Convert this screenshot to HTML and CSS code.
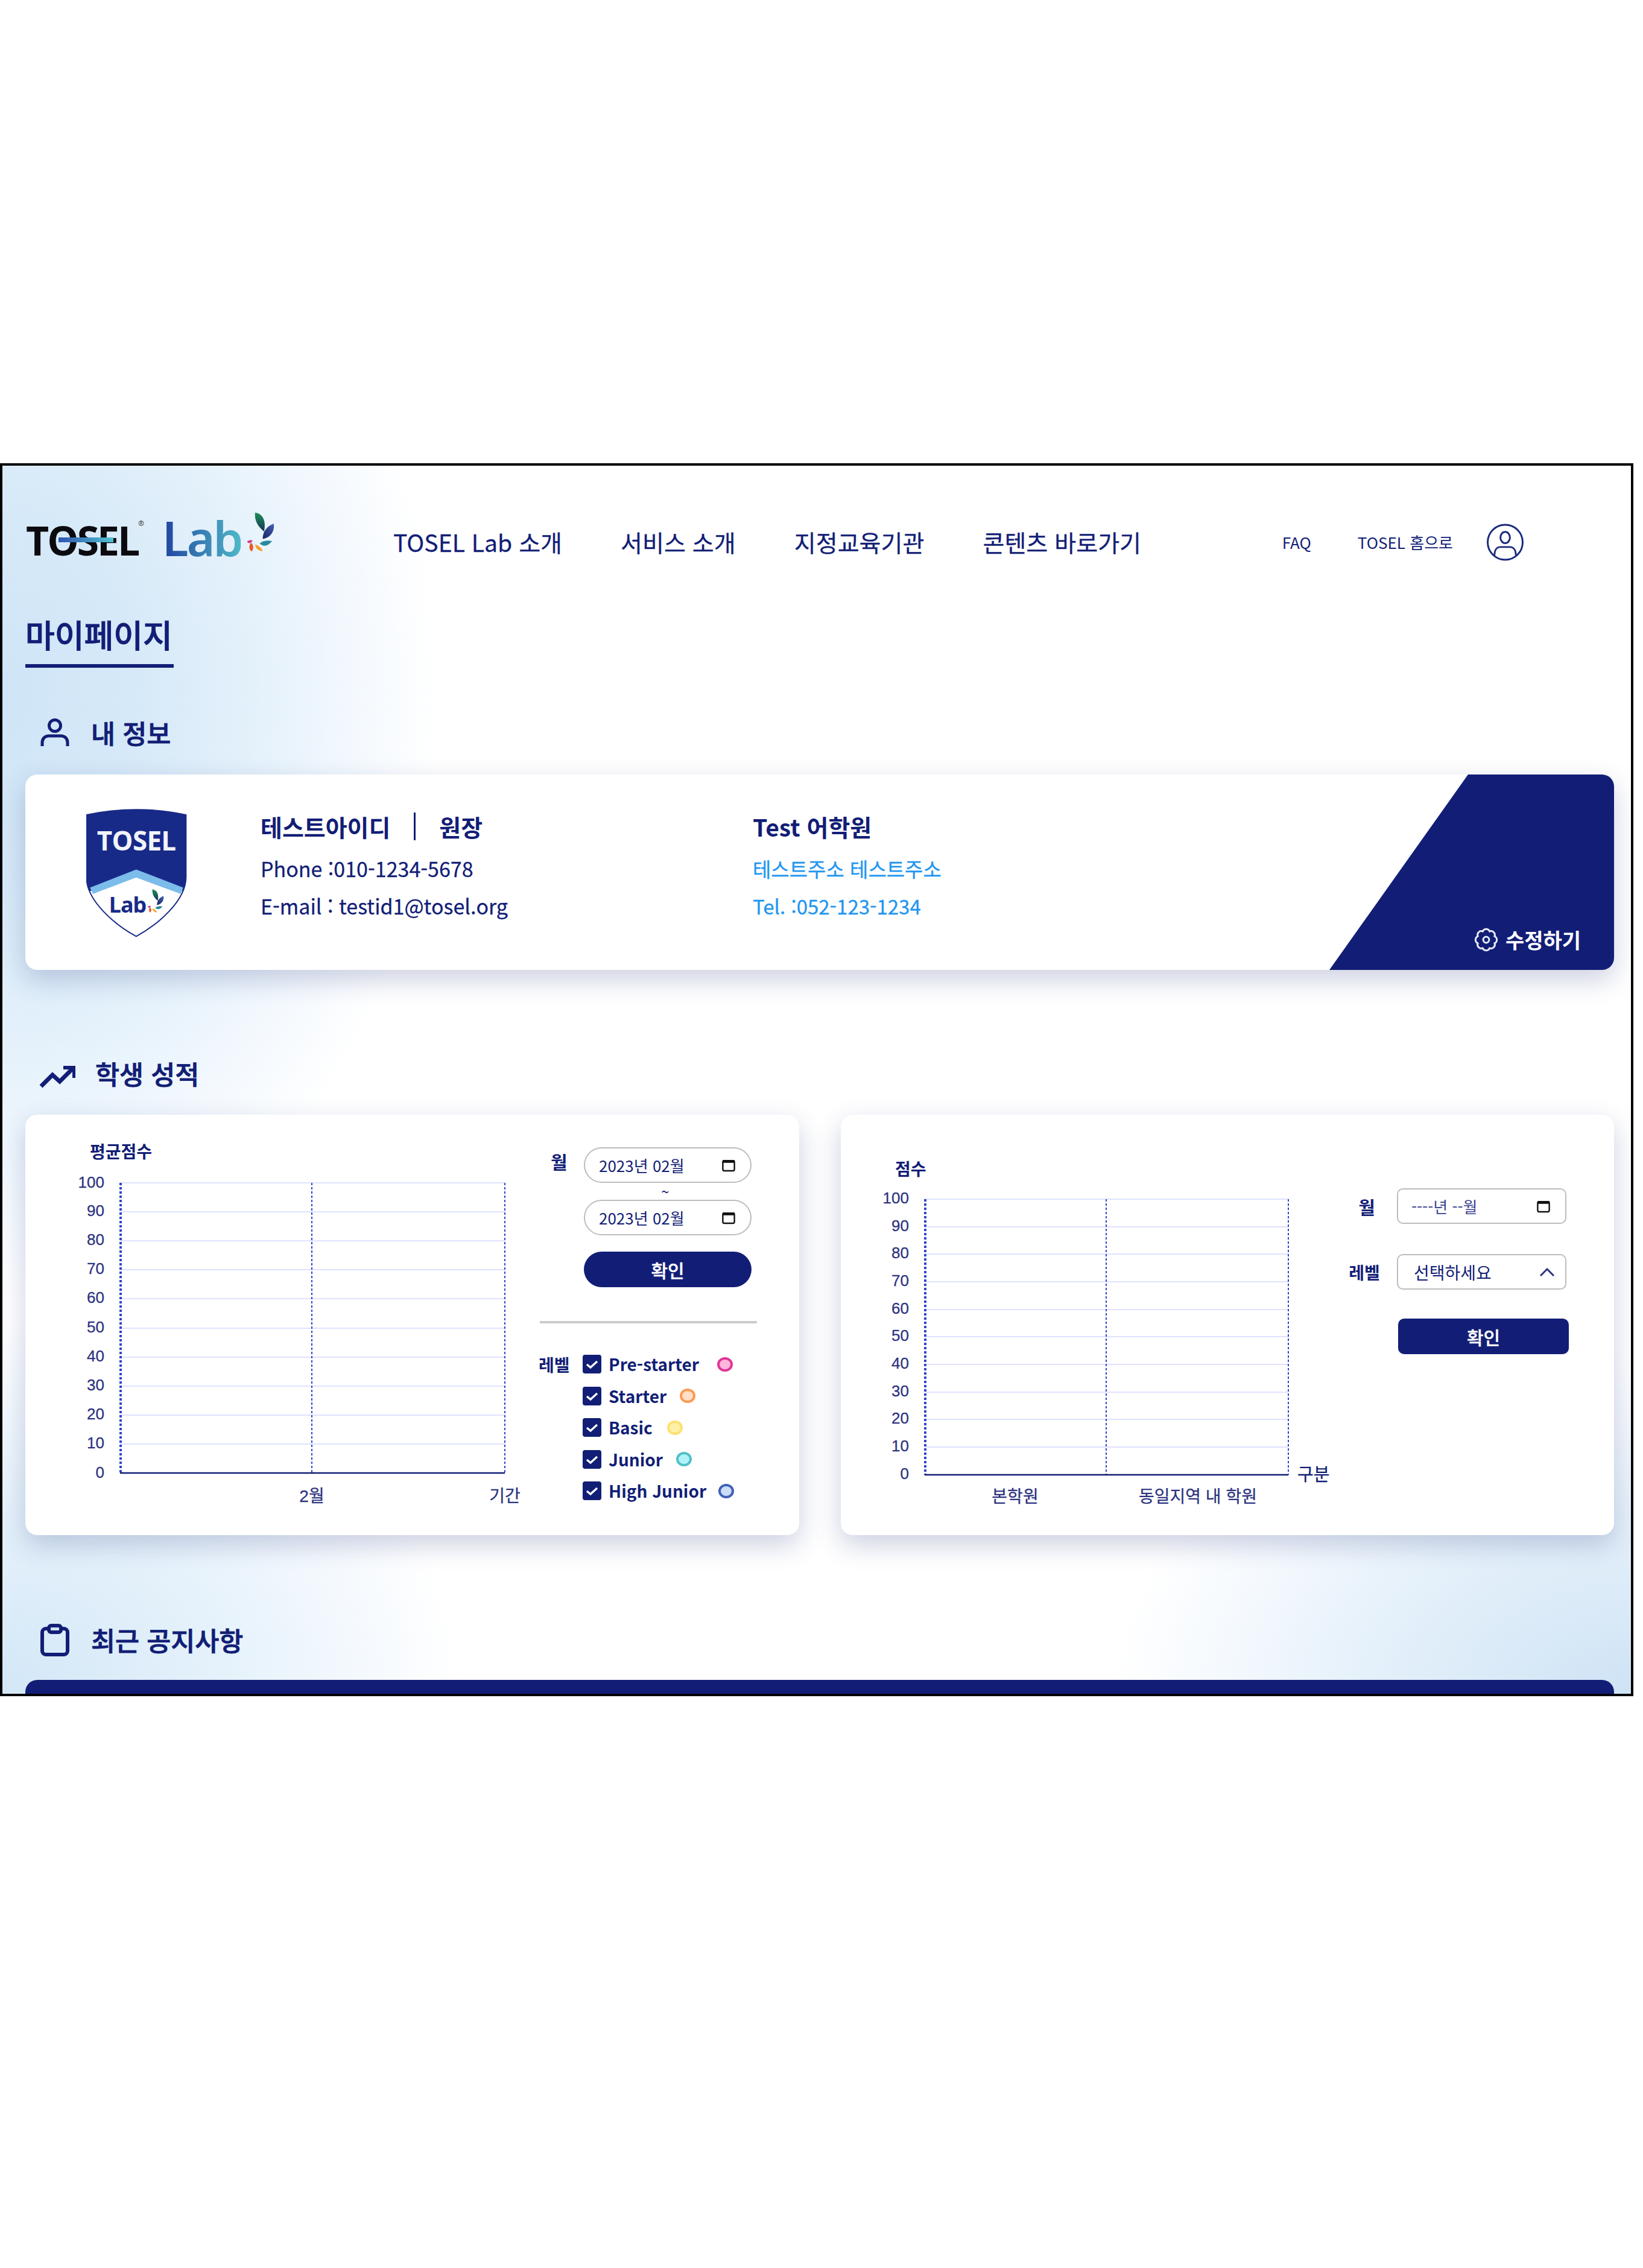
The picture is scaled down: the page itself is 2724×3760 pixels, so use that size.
FILE: index.html
```html
<!DOCTYPE html>
<html lang="ko">
<head>
    <meta charset="UTF-8">
    <title>TOSEL Lab 마이페이지</title>
    <link rel="stylesheet" href="styles.css">
</head>
<body>
    <svg class="defs" width="0" height="0">
        <defs>
            <linearGradient id="leaf-green" x1="0" y1="0" x2="0" y2="1">
                <stop offset="0" stop-color="#1f8f55"/>
                <stop offset="1" stop-color="#14365a"/>
            </linearGradient>
            <linearGradient id="leaf-navy" x1="1" y1="0" x2="0" y2="1">
                <stop offset="0" stop-color="#4460b8"/>
                <stop offset="1" stop-color="#182560"/>
            </linearGradient>
            <symbol id="leaves" viewBox="1160 35 145 205">
                <path fill="url(#leaf-green)" d="M1205 40C1240 45 1262 75 1250 135C1225 115 1200 85 1205 40Z"/>
                <path fill="url(#leaf-navy)" d="M1298 95C1305 130 1285 165 1243 172C1245 130 1265 110 1298 95Z"/>
                <path fill="#2a8a9c" d="M1290 183C1270 210 1245 212 1228 195C1245 180 1270 178 1290 183Z"/>
                <path fill="#e85a20" d="M1185 190C1200 205 1198 225 1187 235C1172 220 1175 205 1185 190Z"/>
                <path fill="#f6a030" d="M1205 200C1225 205 1240 220 1243 233C1222 232 1208 222 1205 200Z"/>
                <path fill="#d03a90" d="M1165 185C1175 175 1190 178 1193 180C1185 195 1172 198 1165 185Z"/>
            </symbol>
            <symbol id="calendar" viewBox="0 0 20 20">
                <rect x="2" y="3.5" width="16" height="14" rx="2" fill="none" stroke="#111" stroke-width="2"/>
                <rect x="2" y="2.5" width="16" height="4" fill="#111"/>
            </symbol>
            <symbol id="check" viewBox="0 0 31 31">
                <path d="M7 16l6 5 11-10" fill="none" stroke="#fff" stroke-width="3.4"/>
            </symbol>
        </defs>
    </svg>

    <div class="frame">
        <header class="header">
            <div class="logo">
                <span class="logo-tosel">TOSEL<i class="logo-bar"></i><sup class="logo-r">®</sup></span>
                <span class="logo-lab">Lab</span>
                <svg class="logo-leaves"><use href="#leaves"/></svg>
            </div>
            <nav class="nav">
                <a>TOSEL Lab 소개</a>
                <a>서비스 소개</a>
                <a>지정교육기관</a>
                <a>콘텐츠 바로가기</a>
            </nav>
            <div class="util">
                <a class="util-faq">FAQ</a>
                <a class="util-home">TOSEL 홈으로</a>
                <svg class="util-user" viewBox="0 0 62 62" fill="none" stroke="#1a2a80" stroke-width="3">
                    <circle cx="31" cy="31" r="29.5"/>
                    <ellipse cx="31" cy="23" rx="8" ry="9.5"/>
                    <path d="M13 53c0-9 4-14 10-14h16c6 0 10 5 10 14"/>
                </svg>
            </div>
        </header>

        <main class="main">
            <h1 class="page-title">마이페이지</h1>

            <h2 class="section-title first">
                <svg class="section-icon" viewBox="0 0 48 48" fill="none" stroke="#121e76" stroke-width="5">
                    <circle cx="24" cy="12" r="9.5"/>
                    <path d="M3 46v-6c0-7 5-11 11-11h20c6 0 11 4 11 11v6"/>
                </svg>
                내 정보
            </h2>
            <section class="card profile">
                <svg class="shield" viewBox="100 60 500 640">
                    <path d="M100 90C260 55 440 55 596 90V400C596 520 450 640 348 695C246 640 100 520 100 400Z" fill="#fff" stroke="#182a88" stroke-width="6"/>
                    <path d="M100 90C260 55 440 55 596 90V400C596 425 590 450 580 470L348 380L118 470C106 450 100 425 100 400Z" fill="#182a88"/>
                    <path d="M348 362L582 452L570 484L348 402L132 484L118 452Z" fill="#7cbcea"/>
                    <text x="349" y="267" class="shield-tosel" text-anchor="middle">TOSEL</text>
                    <text x="305" y="577" class="shield-lab" text-anchor="middle">Lab</text>
                    <use href="#leaves" x="402" y="458" width="86" height="122"/>
                </svg>
                <div class="info info-user">
                    <div class="info-name"><span>테스트아이디</span><i class="info-sep"></i><span>원장</span></div>
                    <p class="info-line">Phone :010-1234-5678</p>
                    <p class="info-line">E-mail : testid1@tosel.org</p>
                </div>
                <div class="info info-academy">
                    <div class="info-name"><span>Test 어학원</span></div>
                    <p class="info-line">테스트주소 테스트주소</p>
                    <p class="info-line">Tel. :052-123-1234</p>
                </div>
                <div class="edit-corner">
                    <a class="edit-link">
                        <svg class="edit-icon" viewBox="0 0 24 24" fill="none" stroke="#e8ebf6" stroke-width="1.7">
                            <circle cx="12" cy="12" r="2.8"/>
                            <path d="M19.95 8.71A3.6 3.6 0 0 1 19.95 15.29A3.6 3.6 0 0 1 15.29 19.95A3.6 3.6 0 0 1 8.71 19.95A3.6 3.6 0 0 1 4.05 15.29A3.6 3.6 0 0 1 4.05 8.71A3.6 3.6 0 0 1 8.71 4.05A3.6 3.6 0 0 1 15.29 4.05A3.6 3.6 0 0 1 19.95 8.71Z"/>
                        </svg>
                        수정하기
                    </a>
                </div>
            </section>

            <h2 class="section-title">
                <svg class="section-icon trend" viewBox="0 0 60 38" fill="none" stroke="#121e76" stroke-width="7">
                    <path d="M3 35l19-19 12 11L55 6"/>
                    <path d="M40 4h18v17" stroke-width="6"/>
                </svg>
                <span class="trend-label">학생 성적</span>
            </h2>
            <div class="card-row">
                <section class="card chart-card">
                    <svg class="chart chart-left" viewBox="0 0 850 697">
                        <g class="grid">
                            <line x1="157" x2="795" y1="113" y2="113"/>
                            <line x1="157" x2="795" y1="161" y2="161"/>
                            <line x1="157" x2="795" y1="209" y2="209"/>
                            <line x1="157" x2="795" y1="257" y2="257"/>
                            <line x1="157" x2="795" y1="305" y2="305"/>
                            <line x1="157" x2="795" y1="354" y2="354"/>
                            <line x1="157" x2="795" y1="402" y2="402"/>
                            <line x1="157" x2="795" y1="450" y2="450"/>
                            <line x1="157" x2="795" y1="498" y2="498"/>
                            <line x1="157" x2="795" y1="546" y2="546"/>
                        </g>
                        <g class="dash">
                            <line x1="157" x2="157" y1="113" y2="594"/>
                            <line x1="159" x2="159" y1="113" y2="594"/>
                            <line x1="475" x2="475" y1="113" y2="594"/>
                            <line x1="795" x2="795" y1="113" y2="594"/>
                        </g>
                        <line class="axis" x1="157" x2="795" y1="594" y2="594"/>
                        <g class="tick" text-anchor="end">
                            <text x="131" y="121">100</text>
                            <text x="131" y="168">90</text>
                            <text x="131" y="216">80</text>
                            <text x="131" y="264">70</text>
                            <text x="131" y="312">60</text>
                            <text x="131" y="361">50</text>
                            <text x="131" y="409">40</text>
                            <text x="131" y="457">30</text>
                            <text x="131" y="505">20</text>
                            <text x="131" y="553">10</text>
                            <text x="131" y="602">0</text>
                        </g>
                        <text class="axis-title" x="107" y="72">평균점수</text>
                        <text class="axis-label" x="475" y="642" text-anchor="middle">2월</text>
                        <text class="axis-label" x="795" y="642" text-anchor="middle">기간</text>
                    </svg>
                    <div class="filter">
                        <div class="date-range">
                            <span class="field-label month-label">월</span>
                            <div class="date-fields">
                                <div class="pill-input"><span>2023년 02월</span><svg class="cal"><use href="#calendar"/></svg></div>
                                <div class="tilde">~</div>
                                <div class="pill-input"><span>2023년 02월</span><svg class="cal"><use href="#calendar"/></svg></div>
                                <button class="btn pill-btn">확인</button>
                            </div>
                        </div>
                        <hr class="filter-line">
                        <div class="levels">
                            <span class="field-label level-label">레벨</span>
                            <ul class="level-list">
                                <li><span class="box"><svg><use href="#check"/></svg></span>Pre-starter<i class="dot dot-pink"></i></li>
                                <li><span class="box"><svg><use href="#check"/></svg></span>Starter<i class="dot dot-orange"></i></li>
                                <li><span class="box"><svg><use href="#check"/></svg></span>Basic<i class="dot dot-yellow"></i></li>
                                <li><span class="box"><svg><use href="#check"/></svg></span>Junior<i class="dot dot-teal"></i></li>
                                <li><span class="box"><svg><use href="#check"/></svg></span>High Junior<i class="dot dot-blue"></i></li>
                            </ul>
                        </div>
                    </div>
                </section>

                <section class="card chart-card">
                    <svg class="chart chart-right" viewBox="0 0 836 697">
                        <g class="grid">
                            <line x1="139" x2="742" y1="140" y2="140"/>
                            <line x1="139" x2="742" y1="186" y2="186"/>
                            <line x1="139" x2="742" y1="231" y2="231"/>
                            <line x1="139" x2="742" y1="277" y2="277"/>
                            <line x1="139" x2="742" y1="323" y2="323"/>
                            <line x1="139" x2="742" y1="368" y2="368"/>
                            <line x1="139" x2="742" y1="414" y2="414"/>
                            <line x1="139" x2="742" y1="460" y2="460"/>
                            <line x1="139" x2="742" y1="505" y2="505"/>
                            <line x1="139" x2="742" y1="551" y2="551"/>
                        </g>
                        <g class="dash">
                            <line x1="139" x2="139" y1="140" y2="597"/>
                            <line x1="141" x2="141" y1="140" y2="597"/>
                            <line x1="440" x2="440" y1="140" y2="597"/>
                            <line x1="742" x2="742" y1="140" y2="597"/>
                        </g>
                        <line class="axis" x1="139" x2="742" y1="597" y2="597"/>
                        <g class="tick" text-anchor="end">
                            <text x="113" y="147">100</text>
                            <text x="113" y="193">90</text>
                            <text x="113" y="238">80</text>
                            <text x="113" y="284">70</text>
                            <text x="113" y="330">60</text>
                            <text x="113" y="375">50</text>
                            <text x="113" y="421">40</text>
                            <text x="113" y="467">30</text>
                            <text x="113" y="512">20</text>
                            <text x="113" y="558">10</text>
                            <text x="113" y="604">0</text>
                        </g>
                        <text class="axis-title" x="90" y="101">점수</text>
                        <text class="axis-label" x="289" y="643" text-anchor="middle">본학원</text>
                        <text class="axis-label" x="592" y="643" text-anchor="middle">동일지역 내 학원</text>
                        <text class="axis-unit" x="757" y="607">구분</text>
                    </svg>
                    <div class="filter filter-right">
                        <div class="form-row">
                            <span class="field-label">월</span>
                            <div class="box-input"><span class="placeholder">----년 --월</span><svg class="cal"><use href="#calendar"/></svg></div>
                        </div>
                        <div class="form-row">
                            <span class="field-label">레벨</span>
                            <div class="box-input select"><span>선택하세요</span>
                                <svg class="chevron" viewBox="0 0 24 14" fill="none" stroke="#2a3585" stroke-width="3"><path d="M1 13L12 2l11 11"/></svg>
                            </div>
                        </div>
                        <button class="btn box-btn">확인</button>
                    </div>
                </section>
            </div>

            <h2 class="section-title">
                <svg class="section-icon" viewBox="0 0 48 54" fill="none" stroke="#121e76" stroke-width="6">
                    <rect x="3" y="8" width="42" height="43" rx="6"/>
                    <rect x="14" y="3" width="20" height="11" rx="4" fill="#cfe0f2"/>
                </svg>
                최근 공지사항
            </h2>
            <div class="notice-bar"></div>
        </main>
    </div>
</body>
</html>
```

FILE: styles.css
```css
* {
    box-sizing: border-box;
}

body {
    margin: 0;
    background-color: #fff;
    color: #121e76;
    font-family: "Noto Sans CJK KR", "Noto Sans", sans-serif;
}

.defs {
    position: absolute;
}

a {
    color: inherit;
    text-decoration: none;
}

/* frame */
.frame {
    width: 2708px;
    height: 2044px;
    margin-top: 768px;
    border: 4px solid #000;
    overflow: hidden;
    background:
        radial-gradient(ellipse 720px 1000px at 0 380px, #cfe5f7 0%, #d6e9f8 30%, #e4f1fb 58%, #f4f9fe 82%, rgba(255, 255, 255, 0) 100%),
        radial-gradient(ellipse 760px 620px at 0 100%, #d3e7f7 0%, #e6f2fb 50%, #f6fafe 82%, rgba(255, 255, 255, 0) 100%),
        radial-gradient(ellipse 860px 560px at 100% 100%, #cfe3f5 0%, #e4f0fa 50%, #f6fafe 82%, rgba(255, 255, 255, 0) 100%),
        #fff;
}

/* header */
.header {
    display: flex;
    align-items: center;
    height: 256px;
    padding: 0 178px 0 39px;
}

.logo {
    display: flex;
    align-items: flex-start;
    flex: none;
    width: 609px;
    height: 70px;
}

.logo-tosel {
    position: relative;
    flex: none;
    width: 231px;
    margin-top: -10px;
    color: #0b0b0f;
    font-family: "Open Sans", sans-serif;
    font-size: 66px;
    font-weight: 700;
    line-height: 80px;
    letter-spacing: -3px;
}

.logo-bar {
    position: absolute;
    left: 54px;
    top: 36px;
    width: 91px;
    height: 8px;
    background: linear-gradient(90deg, #2f55b0, #52c0d0);
}

.logo-r {
    position: absolute;
    left: 186px;
    top: 0;
    font-size: 12px;
    line-height: 26px;
    letter-spacing: 0;
    color: #555;
}

.logo-lab {
    flex: none;
    width: 130px;
    margin: -24px 0 0 -5px;
    color: transparent;
    background: linear-gradient(90deg, #1f43a0, #4fb8c8);
    -webkit-background-clip: text;
    background-clip: text;
    font-family: "Noto Sans", sans-serif;
    font-size: 80px;
    font-weight: 600;
    line-height: 100px;
    letter-spacing: -3px;
}

.logo-leaves {
    flex: none;
    width: 48px;
    height: 68px;
    margin: -17px 0 0 9px;
}

.nav {
    display: flex;
    gap: 97px;
    margin-top: -4px;
    font-size: 39.1px;
    line-height: 50px;
    -webkit-text-stroke: 0.3px #121e76;
}

.util {
    display: flex;
    align-items: center;
    margin-left: auto;
    font-size: 26px;
}

.util-faq {
    margin: -4px 77px 0 0;
}

.util-home {
    margin: -4px 56px 0 0;
}

.util-user {
    width: 61px;
    height: 62px;
    margin-top: -2px;
}

/* main */
.main {
    padding: 0 28px 0 38px;
}

.page-title {
    width: 246px;
    margin: 0;
    padding-bottom: 27px;
    border-bottom: 6px solid #121e76;
    font-size: 53px;
    font-weight: 500;
    line-height: 46px;
    -webkit-text-stroke: 0.9px #121e76;
}

.section-title {
    display: flex;
    align-items: center;
    gap: 36px;
    height: 48px;
    margin: 150px 0 42px;
    padding-left: 25px;
    font-size: 43.5px;
    font-weight: 500;
    line-height: 44px;
    -webkit-text-stroke: 0.9px #121e76;
}

.section-title.first {
    margin-top: 86px;
    margin-bottom: 43px;
    padding-bottom: 4px;
}

.section-icon {
    flex: none;
    width: 48px;
    height: 54px;
}

.section-icon.trend {
    width: 60px;
    height: 38px;
    margin: 6px 0 0 -2px;
}

.trend-label {
    margin-left: -3px;
    padding-bottom: 4px;
}

/* cards */
.card {
    position: relative;
    display: flex;
    background-color: #fff;
    border-radius: 20px;
    box-shadow: 0 16px 44px rgba(40, 60, 130, 0.24);
}

.profile {
    height: 324px;
    padding: 57px 0 0 101px;
    overflow: hidden;
}

.shield {
    flex: none;
    width: 167px;
    height: 213px;
}

.shield-tosel {
    fill: #f2f4fa;
    font-family: "Open Sans", sans-serif;
    font-size: 132px;
    font-weight: 700;
    letter-spacing: -2px;
}

.shield-lab {
    fill: #182a88;
    font-family: "Noto Sans", sans-serif;
    font-size: 108px;
    font-weight: 700;
    letter-spacing: -3px;
}

.info {
    margin-top: 6px;
}

.info-user {
    flex: none;
    width: 816px;
    margin-left: 122px;
}

.info-name {
    display: flex;
    align-items: center;
    height: 46px;
    margin-bottom: 16px;
    font-size: 39px;
    font-weight: 700;
}

.info-sep {
    width: 3px;
    height: 46px;
    margin: 0 39px;
    background-color: #121e76;
}

.info-line {
    margin: 0;
    font-size: 34px;
    line-height: 62px;
    -webkit-text-stroke: 0.3px currentColor;
}

.info-academy .info-line {
    color: #1f96f0;
    font-size: 33px;
}

.edit-corner {
    position: absolute;
    right: 0;
    bottom: 0;
    display: flex;
    align-items: flex-end;
    justify-content: flex-end;
    width: 472px;
    height: 324px;
    padding: 0 55px 29px 0;
    background-color: #121e76;
    clip-path: polygon(230px 0, 100% 0, 100% 100%, 0 100%);
}

.edit-link {
    display: flex;
    align-items: center;
    gap: 11px;
    color: #fff;
    font-size: 34px;
    font-weight: 700;
    line-height: 42px;
}

.edit-icon {
    width: 42px;
    height: 42px;
}

.card-row {
    display: grid;
    grid-template-columns: 1283px 1282px;
    gap: 69px;
}

.chart-card {
    height: 697px;
}

/* charts */
.chart {
    flex: none;
    height: 697px;
    font-family: "Liberation Sans", "Noto Sans CJK KR", sans-serif;
}

.chart-left {
    width: 850px;
}

.chart-right {
    width: 836px;
}

.grid line {
    stroke: #dfe3ff;
    stroke-width: 2;
}

.dash line {
    stroke: #3346c8;
    stroke-width: 2;
    stroke-dasharray: 4 3;
}

.axis {
    stroke: #121e76;
    stroke-width: 2.5;
}

.tick text {
    fill: #2c3380;
    font-size: 26px;
    stroke: #2c3380;
    stroke-width: 0.3;
}

.axis-title {
    fill: #121e76;
    font-size: 28px;
    font-weight: 700;
}

.axis-label {
    fill: #2c3380;
    font-size: 28px;
    stroke: #2c3380;
    stroke-width: 0.3;
}

.axis-unit {
    fill: #121e76;
    font-size: 29px;
    stroke: #121e76;
    stroke-width: 0.3;
}

/* filters */
.filter {
    width: 364px;
    padding-top: 54px;
}

.date-range {
    display: flex;
}

.field-label {
    font-size: 28px;
    font-weight: 700;
    line-height: 36px;
}

.month-label {
    width: 76px;
    padding: 5px 0 0 21px;
    font-size: 30px;
}

.date-fields {
    display: flex;
    flex-direction: column;
    width: 278px;
}

.pill-input {
    display: flex;
    align-items: center;
    justify-content: space-between;
    height: 59px;
    padding: 0 24px 0 23px;
    border: 2px solid #bdbdbd;
    border-radius: 30px;
    font-size: 26px;
}

.cal {
    width: 24px;
    height: 24px;
}

.tilde {
    height: 28px;
    padding-right: 8px;
    font-size: 24px;
    line-height: 28px;
    text-align: center;
}

.btn {
    display: block;
    border: none;
    background-color: #121e76;
    color: #fff;
    font-family: inherit;
    font-size: 30px;
    font-weight: 500;
    line-height: 40px;
    -webkit-text-stroke: 0.4px #fff;
}

.pill-btn {
    height: 59px;
    margin-top: 27px;
    border-radius: 30px;
}

.filter-line {
    width: 360px;
    height: 4px;
    margin: 56px 0 52px 3px;
    border: none;
    background-color: #ccc;
}

.levels {
    display: flex;
}

.level-label {
    width: 74px;
    line-height: 32px;
    padding-left: 1px;
}

.level-list {
    margin: 0;
    padding: 0;
    list-style: none;
}

.level-list li {
    display: flex;
    align-items: center;
    height: 31px;
    margin-bottom: 21.6px;
    font-size: 28px;
    font-weight: 700;
    line-height: 31px;
}

.box {
    flex: none;
    width: 31px;
    height: 31px;
    margin-right: 12px;
    border-radius: 4px;
    background-color: #121e76;
}

.box svg {
    display: block;
    width: 31px;
    height: 31px;
}

.dot {
    width: 26px;
    height: 24px;
    margin-left: 24px;
    border: 4px solid;
    border-radius: 50%;
}

.dot-pink {
    margin-left: 30px;
    border-color: #e0359a;
    background-color: #ffb6dc;
}

.dot-orange {
    margin-left: 22px;
    border-color: #ff9a50;
    background-color: #ffdfc8;
}

.dot-yellow {
    border-color: #ffe070;
    background-color: #fff0a8;
}

.dot-teal {
    margin-left: 22px;
    border-color: #50c0c8;
    background-color: #b2f2f6;
}

.dot-blue {
    margin-left: 20px;
    border-color: #4060b8;
    background-color: #ccdcf8;
}

.filter-right {
    display: flex;
    flex-direction: column;
    width: 380px;
    padding-top: 122px;
}

.form-row {
    display: grid;
    grid-template-columns: 64px 281px;
    gap: 22px;
    align-items: center;
    margin-bottom: 50px;
}

.form-row + .form-row {
    margin-bottom: 48px;
}

.form-row .field-label {
    text-align: center;
}

.form-row:first-child .field-label {
    padding-left: 8px;
    font-size: 30px;
}

.box-input {
    display: flex;
    align-items: center;
    justify-content: space-between;
    height: 59px;
    padding: 0 24px 0 22px;
    border: 2px solid #bdbdbd;
    border-radius: 10px;
    font-size: 26px;
}

.placeholder {
    color: #3a4390;
}

.select {
    padding: 0 18px 0 26px;
    font-size: 28px;
}

.chevron {
    width: 24px;
    height: 14px;
}

.box-btn {
    width: 283px;
    height: 59px;
    margin-left: 88px;
    border-radius: 10px;
}

.notice-bar {
    height: 80px;
    margin-bottom: -60px;
    border-radius: 20px 20px 0 0;
    background-color: #121e76;
}
```
